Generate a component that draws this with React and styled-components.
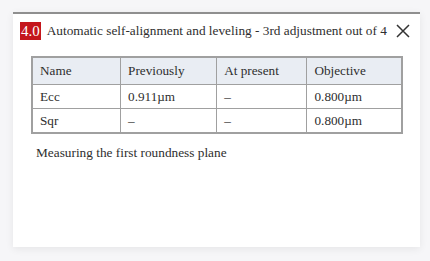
import React from "react";
import styled, { createGlobalStyle } from "styled-components";

const GlobalStyle = createGlobalStyle`
  html, body {
    margin: 0;
    padding: 0;
    background: #f6f6f8;
  }
  body {
    font-family: "Liberation Serif", "Times New Roman", serif;
    color: #2e2e2e;
  }
`;

const Page = styled.div`
  width: 430px;
  height: 261px;
  padding: 12px 10px 13px 13px;
  box-sizing: border-box;
`;

const Dialog = styled.div`
  width: 407px;
  height: 235px;
  background: #fff;
  border-top: 2px solid #8f8f8f;
  box-shadow: 0 2px 8px rgba(0, 0, 0, 0.07);
  box-sizing: border-box;
`;

const Header = styled.div`
  display: flex;
  align-items: center;
  height: 34px;
  padding: 0 10px 0 7px;
`;

const Badge = styled.span`
  background: #c4161c;
  color: #fff;
  font-size: 15px;
  line-height: 18px;
  padding: 0 1px;
  margin-right: 6px;
`;

const Title = styled.span`
  flex: 1;
  font-size: 13.3px;
  color: #2e2e2e;
  white-space: nowrap;
`;

const Close = styled.button`
  border: none;
  background: none;
  padding: 0;
  width: 14px;
  height: 14px;
  display: flex;
  cursor: pointer;
`;

const Body = styled.div`
  padding: 8px 17px 0 18px;
`;

const Table = styled.table`
  width: 372px;
  border-collapse: collapse;
  border: 2px solid #a0a0a0;
  font-size: 13.2px;
`;

const Th = styled.th`
  background: #e9edf3;
  font-weight: normal;
  text-align: left;
  height: 26px;
  padding: 0 7px;
  border: 1px solid #a0a0a0;
  width: ${(p) => p.w}px;
`;

const Td = styled.td`
  height: 23px;
  padding: 0 7px;
  border: 1px solid #a0a0a0;
`;

const Note = styled.p`
  margin: 11px 0 0 5px;
  font-size: 13.3px;
`;

const rows = [
  ["Ecc", "0.911\u00b5m", "\u2013", "0.800\u00b5m"],
  ["Sqr", "\u2013", "\u2013", "0.800\u00b5m"],
];

export default function App() {
  return (
    <Page>
      <GlobalStyle />
      <Dialog>
        <Header>
          <Badge>4.0</Badge>
          <Title>Automatic self-alignment and leveling - 3rd adjustment out of 4</Title>
          <Close aria-label="close">
            <svg width="14" height="14" viewBox="0 0 14 14">
              <path d="M1 1L13 13M13 1L1 13" stroke="#333" strokeWidth="1.5" />
            </svg>
          </Close>
        </Header>
        <Body>
          <Table>
            <thead>
              <tr>
                <Th w={93}>Name</Th>
                <Th w={93}>Previously</Th>
                <Th w={93}>At present</Th>
                <Th w={93}>Objective</Th>
              </tr>
            </thead>
            <tbody>
              {rows.map((r) => (
                <tr key={r[0]}>
                  {r.map((c, i) => (
                    <Td key={i}>{c}</Td>
                  ))}
                </tr>
              ))}
            </tbody>
          </Table>
          <Note>Measuring the first roundness plane</Note>
        </Body>
      </Dialog>
    </Page>
  );
}
